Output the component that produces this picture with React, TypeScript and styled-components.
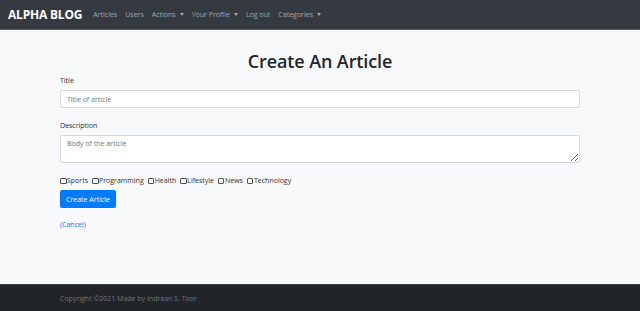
import React from "react";
import styled, { createGlobalStyle } from "styled-components";

const Global = createGlobalStyle`
  html, body { margin: 0; padding: 0; }
  body {
    background: #f8f9fa;
    font-family: "Open Sans", "Noto Sans", sans-serif;
    color: #212529;
  }
`;

const Page = styled.div`
  display: flex;
  flex-direction: column;
  height: 311px;
`;

const Navbar = styled.nav`
  display: flex;
  align-items: center;
  height: 29px;
  padding: 0 8px;
  background: #343a40;
  border-bottom: 1px solid #5a6068;
`;

const Brand = styled.a`
  font-family: "Open Sans", sans-serif;
  font-weight: 700;
  font-size: 12px;
  color: #fff;
  margin-right: 11px;
  letter-spacing: -0.2px;
`;

const NavLink = styled.a`
  font-size: 7px;
  color: rgba(255, 255, 255, 0.55);
  margin-right: 8px;
  display: inline-flex;
  align-items: center;
`;

const Caret = styled.span`
  display: inline-block;
  margin-left: 4px;
  width: 0;
  height: 0;
  border-left: 2.5px solid transparent;
  border-right: 2.5px solid transparent;
  border-top: 3px solid rgba(255, 255, 255, 0.55);
`;

const Main = styled.main`
  flex: 1;
  padding: 0 60px;
  display: flex;
  flex-direction: column;
`;

const Heading = styled.h1`
  margin: 19px 0 0;
  text-align: center;
  font-size: 18px;
  font-weight: 600;
  line-height: 24px;
  letter-spacing: -0.1px;
`;

const Label = styled.label<{ $mt: number }>`
  display: block;
  font-size: 7px;
  line-height: 10px;
  margin-top: ${(p) => p.$mt}px;
  color: #333;
`;

const Input = styled.input`
  box-sizing: border-box;
  width: 520px;
  height: 18px;
  margin-top: 4px;
  border: 1px solid #d6dadf;
  border-radius: 2px;
  background: #fff;
  padding: 0 6px;
  font-family: inherit;
  font-size: 7px;
  outline: none;
  &::placeholder { color: #6c757d; }
`;

const TextArea = styled.textarea`
  box-sizing: border-box;
  width: 520px;
  height: 28px;
  margin-top: 4px;
  border: 1px solid #d6dadf;
  border-radius: 2px;
  background: #fff;
  padding: 3px 6px;
  font-family: inherit;
  font-size: 7px;
  outline: none;
  display: block;
  &::placeholder { color: #6c757d; }
`;

const Checks = styled.div`
  display: flex;
  align-items: center;
  margin-top: 13px;
  font-size: 7px;
  line-height: 10px;
  color: #333;
`;

const CheckItem = styled.label`
  display: inline-flex;
  align-items: center;
  margin-right: 4px;
`;

const Box = styled.span`
  box-sizing: border-box;
  width: 6.5px;
  height: 6.5px;
  border: 1px solid #555;
  border-radius: 1px;
  background: #fff;
  margin-right: 0.5px;
`;

const Button = styled.button`
  align-self: flex-start;
  margin-top: 4px;
  height: 18px;
  width: 56px;
  border: none;
  border-radius: 2px;
  background: #007bff;
  color: #fff;
  font-family: inherit;
  font-size: 7px;
  padding: 0;
`;

const Cancel = styled.a`
  margin-top: 12px;
  font-size: 7px;
  color: #007bff;
`;

const Footer = styled.footer`
  height: 26px;
  background: #212529;
  border-top: 1px solid #3a3f45;
  display: flex;
  align-items: center;
  padding: 0 60px;
  font-size: 7px;
  color: #6c757d;
`;

const categories = ["Sports", "Programming", "Health", "Lifestyle", "News", "Technology"];

export default function App() {
  return (
    <Page>
      <Global />
      <Navbar>
        <Brand>ALPHA BLOG</Brand>
        <NavLink>Articles</NavLink>
        <NavLink>Users</NavLink>
        <NavLink>Actions<Caret /></NavLink>
        <NavLink>Your Profile<Caret /></NavLink>
        <NavLink>Log out</NavLink>
        <NavLink>Categories<Caret /></NavLink>
      </Navbar>
      <Main>
        <Heading>Create An Article</Heading>
        <Label $mt={3}>Title</Label>
        <Input placeholder="Title of article" />
        <Label $mt={13}>Description</Label>
        <TextArea placeholder="Body of the article" />
        <Checks>
          {categories.map((c) => (
            <CheckItem key={c}>
              <Box />
              {c}
            </CheckItem>
          ))}
        </Checks>
        <Button>Create Article</Button>
        <Cancel>(Cancel)</Cancel>
      </Main>
      <Footer>Copyright ©2021 Made by Indraan S. Toor</Footer>
    </Page>
  );
}
